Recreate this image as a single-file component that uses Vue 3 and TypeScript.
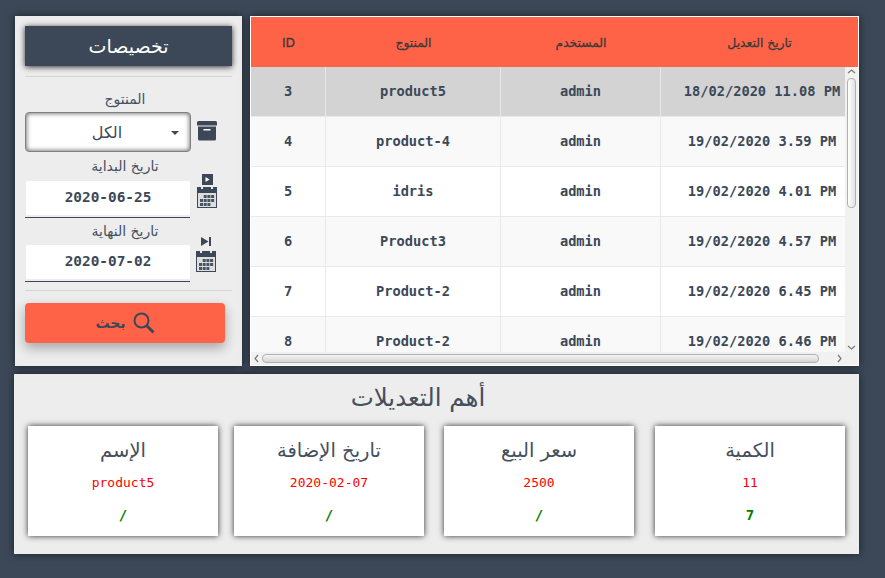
<script setup lang="ts">
const rows = [
  { id: 3, product: 'product5', user: 'admin', date: '18/02/2020 11.08 PM' },
  { id: 4, product: 'product-4', user: 'admin', date: '19/02/2020 3.59 PM' },
  { id: 5, product: 'idris', user: 'admin', date: '19/02/2020 4.01 PM' },
  { id: 6, product: 'Product3', user: 'admin', date: '19/02/2020 4.57 PM' },
  { id: 7, product: 'Product-2', user: 'admin', date: '19/02/2020 6.45 PM' },
  { id: 8, product: 'Product-2', user: 'admin', date: '19/02/2020 6.46 PM' },
]
const cards = [
  { title: 'الإسم', value: 'product5', diff: '/' },
  { title: 'تاريخ الإضافة', value: '2020-02-07', diff: '/' },
  { title: 'سعر البيع', value: '2500', diff: '/' },
  { title: 'الكمية', value: '11', diff: '7' },
]
const calCells = [0, 1, 2, 3]
  .flatMap((c) => [0, 1, 2].map((r) => ({ c, r, x: 3 + c * 3.7, y: 8 + r * 4, key: `${c}-${r}` })))
  .filter((k) => !(k.r === 0 && k.c === 0) && !(k.r === 2 && k.c === 3))
</script>

<template>
  <div class="page">
    <div class="top">
      <aside class="filters">
        <div class="title-btn">تخصيصات</div>
        <hr class="rule first" />
        <div class="label">المنتوج</div>
        <div class="field-row">
          <div class="select"><span class="select-text">الكل</span><span class="caret"></span></div>
          <svg class="archive" viewBox="0 0 20 20" width="20" height="20">
            <path fill="#3c4858" d="M0 1.500A1.500 1.500 0 0 1 1.500 0h17A1.500 1.500 0 0 1 20 1.500V4.500H0zM1 5.500h18v12.500a1.500 1.500 0 0 1-1.500 1.500h-15A1.500 1.500 0 0 1 1 18z" />
            <rect x="6.500" y="8" width="7" height="1.500" fill="#fff" />
          </svg>
        </div>
        <div class="label second">تاريخ البداية</div>
        <div class="field-row">
          <div class="date"><span class="date-box">2020-06-25</span></div>
          <div class="date-icons shifted">
            <svg width="11" height="11" viewBox="0 0 11 11"><rect width="11" height="11" fill="#3c4858" /><path d="M3.500 3 7.500 5.500 3.500 8z" fill="#fff" /></svg>
            <svg width="20" height="21" viewBox="0 0 20 21">
              <rect width="20" height="21" fill="#3c4858" />
              <rect x="4" y="0" width="2" height="2" fill="#e8e8e8" /><rect x="14" y="0" width="2" height="2" fill="#e8e8e8" />
              <rect x="1" y="6" width="18" height="14" fill="#dedede" />
              <rect v-for="c in calCells" :key="c.key" :x="c.x" :y="c.y" width="3" height="3" fill="#4a5564" />
            </svg>
          </div>
        </div>
        <div class="label third">تاريخ النهاية</div>
        <div class="field-row">
          <div class="date"><span class="date-box">2020-07-02</span></div>
          <div class="date-icons last">
            <svg width="11" height="11" viewBox="0 0 11 11"><path d="M0 1 7.500 5.500 0 10z" fill="#3c4858" /><rect x="8" y="1" width="2" height="9" fill="#3c4858" /></svg>
            <svg width="20" height="21" viewBox="0 0 20 21">
              <rect width="20" height="21" fill="#3c4858" />
              <rect x="4" y="0" width="2" height="2" fill="#e8e8e8" /><rect x="14" y="0" width="2" height="2" fill="#e8e8e8" />
              <rect x="1" y="6" width="18" height="14" fill="#dedede" />
              <rect v-for="c in calCells" :key="c.key" :x="c.x" :y="c.y" width="3" height="3" fill="#4a5564" />
            </svg>
          </div>
        </div>
        <hr class="rule last" />
        <div class="search">
          <svg width="22" height="22" viewBox="0 0 22 22" fill="none" stroke="#3c4858">
            <circle cx="8.500" cy="8.500" r="7" stroke-width="2" />
            <path d="M13.500 13.500l7 7" stroke-width="3" />
          </svg>
          <span>بحث</span>
        </div>
      </aside>

      <section class="table-panel">
        <div class="thead">
          <div class="c-id">ID</div>
          <div class="c-product">المنتوج</div>
          <div class="c-user">المستخدم</div>
          <div class="c-date head-date">تاريخ التعديل</div>
        </div>
        <div class="tbody-wrap">
          <div class="tbody">
            <div v-for="(r, i) in rows" :key="r.id" class="tr" :class="{ selected: i === 0, odd: i % 2 === 1 }">
              <div class="c-id">{{ r.id }}</div>
              <div class="c-product">{{ r.product }}</div>
              <div class="c-user">{{ r.user }}</div>
              <div class="c-date">{{ r.date }}</div>
            </div>
          </div>
          <div class="vbar">
            <svg class="arrow" width="13" height="10" viewBox="0 0 13 10"><path d="M3 6l3.500-3L10 6" fill="none" stroke="#777" stroke-width="1.200" /></svg>
            <div class="vthumb"></div>
            <svg class="arrow end" width="13" height="10" viewBox="0 0 13 10"><path d="M3 4l3.500 3L10 4" fill="none" stroke="#777" stroke-width="1.200" /></svg>
          </div>
        </div>
        <div class="hbar">
          <svg width="11" height="13" viewBox="0 0 11 13"><path d="M7 3L4 6.500 7 10" fill="none" stroke="#777" stroke-width="1.200" /></svg>
          <div class="hthumb"></div>
          <svg width="11" height="13" viewBox="0 0 11 13"><path d="M4 3l3 3.500L4 10" fill="none" stroke="#777" stroke-width="1.200" /></svg>
        </div>
      </section>
    </div>

    <section class="summary">
      <h2>أهم التعديلات</h2>
      <div class="cards">
        <div v-for="c in cards" :key="c.title" class="card">
          <div class="card-title">{{ c.title }}</div>
          <div class="card-value">{{ c.value }}</div>
          <div class="card-diff">{{ c.diff }}</div>
        </div>
      </div>
    </section>
  </div>
</template>

<style>
html, body { margin: 0; background: #3c4858; }
</style>

<style scoped>
.page {
  width: 885px;
  height: 578px;
  box-sizing: border-box;
  padding: 16px 26px 0 14px;
  background: #3c4858;
  font-family: "DejaVu Sans", "Noto Sans", sans-serif;
  color: #3c4858;
  overflow: hidden;
}
.top { display: flex; gap: 8px; height: 350px; padding-left: 1px; }
.filters {
  width: 227px;
  box-sizing: border-box;
  padding: 10px;
  background: #ededed;
  box-shadow: 0 0 8px rgba(0, 0, 0, 0.55);
  flex: none;
}
.title-btn {
  width: 207px;
  height: 40px;
  line-height: 41px;
  text-align: center;
  background: #3c4858;
  color: #fff;
  font-size: 19px;
  box-shadow: 0 1px 6px rgba(0, 0, 0, 0.8);
}
.rule { border: 0; border-top: 1px solid #d5d5d5; margin: 0; width: 207px; }
.rule.first { margin-top: 10px; }
.rule.last { margin-top: 8px; }
.label { text-align: center; width: 200px; font-size: 14px; line-height: 18px; color: #454f5d; }
.label:not(.second):not(.third) { margin-top: 13px; height: 22px; }
.label.second { margin-top: 5px; height: 24px; }
.label.third { margin-top: 4px; height: 23px; }
.field-row { display: flex; gap: 6px; align-items: flex-end; }
.select {
  width: 166px;
  height: 40px;
  box-sizing: border-box;
  background: #fff;
  border: 1px solid #808080;
  border-radius: 4px;
  box-shadow: inset 0 0 5px rgba(0, 0, 0, 0.7);
  display: flex;
  align-items: center;
  justify-content: center;
  position: relative;
  font-size: 16px;
  font-weight: 500;
}
.select-text { margin-left: -2px; }
.caret {
  position: absolute;
  right: 11px;
  top: 18px;
  border: 4px solid transparent;
  border-top-color: #3c4858;
  border-bottom: 0;
}
.archive { margin-bottom: 11px; }
.date {
  width: 165px;
  height: 37px;
  box-sizing: border-box;
  border-bottom: 1px solid #3c4858;
  padding: 0 0 2px 1px;
  flex: none;
}
.date-box {
  display: block;
  height: 34px;
  background: #fff;
  text-align: center;
  line-height: 33px;
  font-family: "DejaVu Sans Mono", monospace;
  font-weight: 700;
  font-size: 14.400px;
}
.date-icons {
  display: flex;
  flex-direction: column;
  align-items: center;
  gap: 2px;
  width: 20px;
  margin-bottom: 10px;
  margin-top: -10px;
}
.date-icons.shifted { margin-left: 1px; }
.date-icons.last { gap: 4px; }
.date-icons.last svg:first-child { margin-left: 1px; }
.search {
  width: 200px;
  height: 40px;
  margin-top: 12px;
  background: #ff6347;
  border-radius: 4px;
  box-shadow: 0 5px 12px rgba(0, 0, 0, 0.3);
  display: flex;
  flex-direction: row-reverse;
  align-items: center;
  justify-content: center;
  gap: 7px;
  font-size: 14px;
  font-weight: 600;
}
.table-panel {
  width: 609px;
  height: 350px;
  box-sizing: border-box;
  border: 1px solid #fff;
  background: #f1f1f1;
  box-shadow: 0 0 8px rgba(0, 0, 0, 0.5);
  flex: none;
  display: flex;
  flex-direction: column;
  font-family: "DejaVu Sans Mono", monospace;
  font-weight: 700;
  font-size: 13.700px;
}
.thead, .tr { display: flex; }
.thead {
  height: 50px;
  flex: none;
  background: #ff6347;
  color: #3a3a3a;
  font-size: 12.300px;
  font-weight: 400;
  -webkit-text-stroke: 0.3px #3a3a3a;
  line-height: 52px;
  text-align: center;
  font-family: "DejaVu Sans", sans-serif;
}
.c-id { width: 75px; flex: none; }
.c-product { width: 175px; flex: none; }
.c-user { width: 160px; flex: none; }
.c-date { width: 184px; flex: none; }
.head-date { width: 197px; }
.tbody-wrap { display: flex; height: 285px; flex: none; }
.tbody { width: 594px; overflow: hidden; background: #fff; }
.tr { height: 50px; background: #fff; }
.tr.odd { background: #f9f9f9; }
.tr.selected { background: #d3d3d3; }
.tr > div {
  box-sizing: border-box;
  height: 50px;
  line-height: 48px;
  text-align: center;
  border-right: 1px solid #e9e9e9;
  border-bottom: 1px solid #e9e9e9;
  white-space: nowrap;
}
.tr > div:last-child { border-right: 0; padding-left: 18px; }
.vbar { width: 13px; display: flex; flex-direction: column; background: #f1f1f1; align-items: center; }
.vthumb {
  width: 9px;
  height: 130px;
  margin-top: 1px;
  box-sizing: border-box;
  background: linear-gradient(90deg, #fff, #e0e0e0);
  border: 1px solid #b0b0b0;
  border-radius: 4px;
}
.arrow.end { margin-top: auto; }
.hbar { height: 13px; display: flex; align-items: center; background: #f1f1f1; width: 594px; }
.hthumb {
  width: 557px;
  height: 9px;
  box-sizing: border-box;
  background: linear-gradient(180deg, #f4f4f4, #d4d4d4);
  border: 1px solid #b0b0b0;
  border-radius: 4px;
}
.hbar svg:last-child { margin-left: auto; }
.summary {
  margin-top: 8px;
  width: 845px;
  height: 180px;
  box-sizing: border-box;
  background: #ededed;
  box-shadow: 0 0 8px rgba(0, 0, 0, 0.55);
  padding: 0 14px;
}
.summary h2 {
  margin: 0;
  height: 52px;
  line-height: 48px;
  padding-right: 37px;
  text-align: center;
  font-size: 24.500px;
  font-weight: 400;
  color: #454f5d;
}
.cards { display: flex; gap: 16px; }
.card {
  width: 190px;
  height: 110px;
  background: #fff;
  box-shadow: 0 0 6px rgba(0, 0, 0, 0.8);
  text-align: center;
  flex: none;
}
.card:nth-child(3) { margin-left: 4px; }
.card:nth-child(4) { margin-left: 5px; }
.card-title { font-size: 19.500px; line-height: 26px; margin-top: 12px; color: #454f5d; }
.card-value {
  font-family: "DejaVu Sans Mono", monospace;
  font-size: 13px;
  line-height: 16px;
  margin-top: 11px;
  color: #ff0000;
}
.card-diff {
  font-family: "DejaVu Sans Mono", monospace;
  font-weight: 700;
  font-size: 14px;
  line-height: 18px;
  margin-top: 15px;
  color: #008000;
}
</style>
